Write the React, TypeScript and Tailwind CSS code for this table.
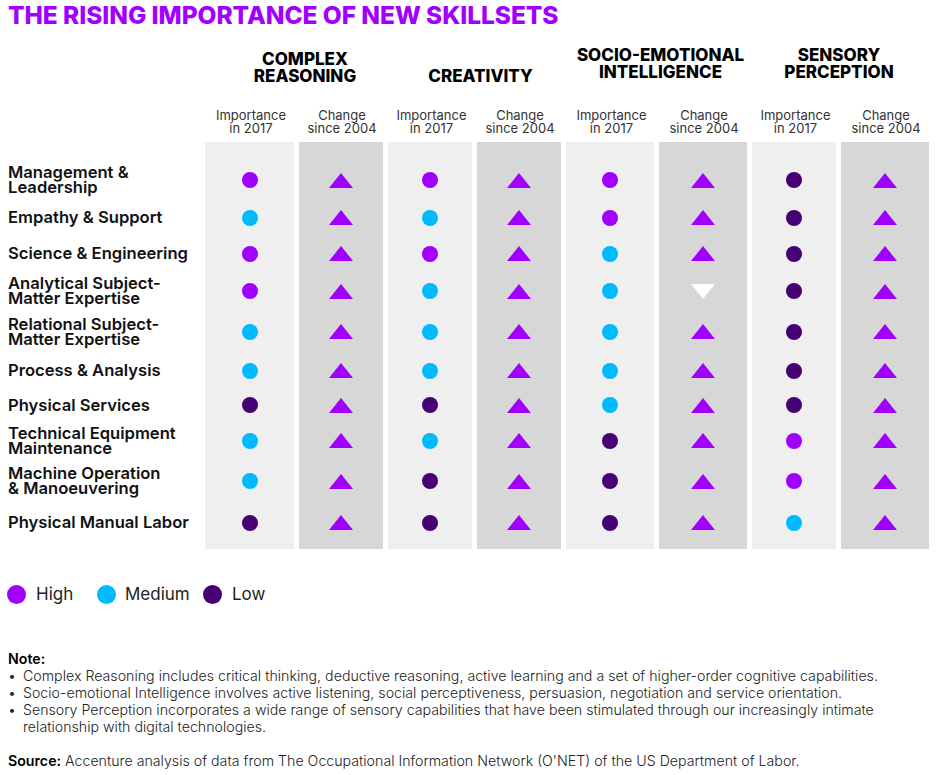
import React from 'react';

const HIGH = 'bg-[#a100ff]';
const MED = 'bg-[#00baff]';
const LOW = 'bg-[#460073]';

type Lvl = 'h' | 'm' | 'l';
type Dir = 'u' | 'd';

const levelClass: Record<Lvl, string> = { h: HIGH, m: MED, l: LOW };

const rows: { label: string[]; imp: Lvl[]; chg: Dir[]; h: string }[] = [
    { label: ['Management &', 'Leadership'], imp: ['h', 'h', 'h', 'l'], chg: ['u', 'u', 'u', 'u'], h: 'h-[38px]' },
    { label: ['Empathy & Support'], imp: ['m', 'm', 'h', 'l'], chg: ['u', 'u', 'u', 'u'], h: 'h-[37px]' },
    { label: ['Science & Engineering'], imp: ['h', 'h', 'm', 'l'], chg: ['u', 'u', 'u', 'u'], h: 'h-[35px]' },
    { label: ['Analytical Subject-', 'Matter Expertise'], imp: ['h', 'm', 'm', 'l'], chg: ['u', 'u', 'd', 'u'], h: 'h-[40px]' },
    { label: ['Relational Subject-', 'Matter Expertise'], imp: ['m', 'm', 'm', 'l'], chg: ['u', 'u', 'u', 'u'], h: 'h-[41px]' },
    { label: ['Process & Analysis'], imp: ['m', 'm', 'm', 'l'], chg: ['u', 'u', 'u', 'u'], h: 'h-[37px]' },
    { label: ['Physical Services'], imp: ['l', 'l', 'm', 'l'], chg: ['u', 'u', 'u', 'u'], h: 'h-[32px]' },
    { label: ['Technical Equipment', 'Maintenance'], imp: ['m', 'm', 'l', 'h'], chg: ['u', 'u', 'u', 'u'], h: 'h-[39px]' },
    { label: ['Machine Operation', '& Manoeuvering'], imp: ['m', 'l', 'l', 'h'], chg: ['u', 'u', 'u', 'u'], h: 'h-[42px]' },
    { label: ['Physical Manual Labor'], imp: ['l', 'l', 'l', 'm'], chg: ['u', 'u', 'u', 'u'], h: 'h-[41px]' },
];

const GRID = 'grid grid-cols-[200px_89px_84px_84px_84px_88px_88px_84px_88px] gap-x-[5px]';

function Dot({ lvl }: { lvl: Lvl }) {
    return <span className={`block w-4 h-4 rounded-full ${levelClass[lvl]}`} />;
}

function Tri({ dir }: { dir: Dir }) {
    return (
        <svg width="24" height="15" viewBox="0 0 24 15">
            {dir === 'u' ? <polygon points="12,0 24,15 0,15" fill="#a100ff" /> : <polygon points="0,0 24,0 12,15" fill="#ffffff" />}
        </svg>
    );
}

function Spacer({ h }: { h: string }) {
    return (
        <div className={GRID}>
            <div className={h} />
            {[0, 1, 2, 3].map((i) => (
                <React.Fragment key={i}>
                    <div className={`${h} bg-[#efefef]`} />
                    <div className={`${h} bg-[#d7d7d7]`} />
                </React.Fragment>
            ))}
        </div>
    );
}

export default function App() {
    const groups = [
        { title: ['COMPLEX', 'REASONING'], pad: 'pb-0 pl-[22px]' },
        { title: ['CREATIVITY'], pad: 'pb-0 pl-[12px]' },
        { title: ['SOCIO-EMOTIONAL', 'INTELLIGENCE'], pad: 'pb-[4px] pl-[8px]' },
        { title: ['SENSORY', 'PERCEPTION'], pad: 'pb-[4px] pr-[3px]' },
    ];

    return (
        <div className="w-[939px] h-[775px] bg-white overflow-hidden font-['Inter',sans-serif] text-[#1a1a1a]">
            {/* Title */}
            <h1 className="pl-2 pt-[1px] text-[24.5px] leading-[28px] font-extrabold text-[#a100ff] tracking-[-0.05px]">
                THE RISING IMPORTANCE OF NEW SKILLSETS
            </h1>

            {/* Skill group headers */}
            <div className={`${GRID} h-[56px] items-end`}>
                <div />
                {groups.map((g, i) => (
                    <div key={i} className={`col-span-2 text-center text-[17px] leading-[17px] font-extrabold text-black ${g.pad}`}>
                        {g.title.map((t) => (
                            <div key={t}>{t}</div>
                        ))}
                    </div>
                ))}
            </div>

            {/* Sub headers */}
            <div className={`${GRID} pt-[24px] mb-[7px]`}>
                <div />
                {[0, 1, 2, 3].map((i) => (
                    <React.Fragment key={i}>
                        <div className="text-center text-[13px] leading-[13px] text-[#333] pl-[3px]">
                            Importance
                            <br />
                            in 2017
                        </div>
                        <div className="text-center text-[13px] leading-[13px] text-[#333] pl-[2px]">
                            Change
                            <br />
                            since 2004
                        </div>
                    </React.Fragment>
                ))}
            </div>

            {/* Table body */}
            <Spacer h="h-[19px]" />
            {rows.map((r, ri) => (
                <div key={ri} className={GRID}>
                    <div className={`${r.h} pl-2 flex flex-col justify-center text-[16.6px] leading-[15px] font-semibold text-[#111]`}>
                        {r.label.map((l) => (
                            <span key={l}>{l}</span>
                        ))}
                    </div>
                    {[0, 1, 2, 3].map((i) => (
                        <React.Fragment key={i}>
                            <div className={`${r.h} bg-[#efefef] flex items-center justify-center`}>
                                <Dot lvl={r.imp[i]} />
                            </div>
                            <div className={`${r.h} bg-[#d7d7d7] flex items-center justify-center`}>
                                <Tri dir={r.chg[i]} />
                            </div>
                        </React.Fragment>
                    ))}
                </div>
            ))}
            <Spacer h="h-[6px]" />

            {/* Legend */}
            <div className="flex items-center pl-[7px] mt-[35px] text-[17px] leading-[20px] text-[#222]">
                <div className="w-[90px] flex items-center gap-[10px]">
                    <span className="block w-[19px] h-[19px] rounded-full bg-[#a100ff]" />
                    High
                </div>
                <div className="w-[106px] flex items-center gap-[9px]">
                    <span className="block w-[19px] h-[19px] rounded-full bg-[#00baff]" />
                    Medium
                </div>
                <div className="flex items-center gap-[10px]">
                    <span className="block w-[19px] h-[19px] rounded-full bg-[#460073]" />
                    Low
                </div>
            </div>

            {/* Notes */}
            <div className="pl-2 mt-[46px] text-[14.2px] leading-[17px] text-[#222] font-light">
                <div className="font-semibold text-black">Note:</div>
                <ul>
                    {[
                        'Complex Reasoning includes critical thinking, deductive reasoning, active learning and a set of higher-order cognitive capabilities.',
                        'Socio-emotional Intelligence involves active listening, social perceptiveness, persuasion, negotiation and service orientation.',
                    ].map((t) => (
                        <li key={t} className="flex">
                            <span className="w-[15px] shrink-0">•</span>
                            <span>{t}</span>
                        </li>
                    ))}
                    <li className="flex">
                        <span className="w-[15px] shrink-0">•</span>
                        <span>
                            Sensory Perception incorporates a wide range of sensory capabilities that have been stimulated through our increasingly intimate
                            <br />
                            relationship with digital technologies.
                        </span>
                    </li>
                </ul>
                <div className="mt-[17px]">
                    <span className="font-semibold text-black">Source:</span> Accenture analysis of data from The Occupational Information Network (O'NET) of the US Department of Labor.
                </div>
            </div>
        </div>
    );
}
